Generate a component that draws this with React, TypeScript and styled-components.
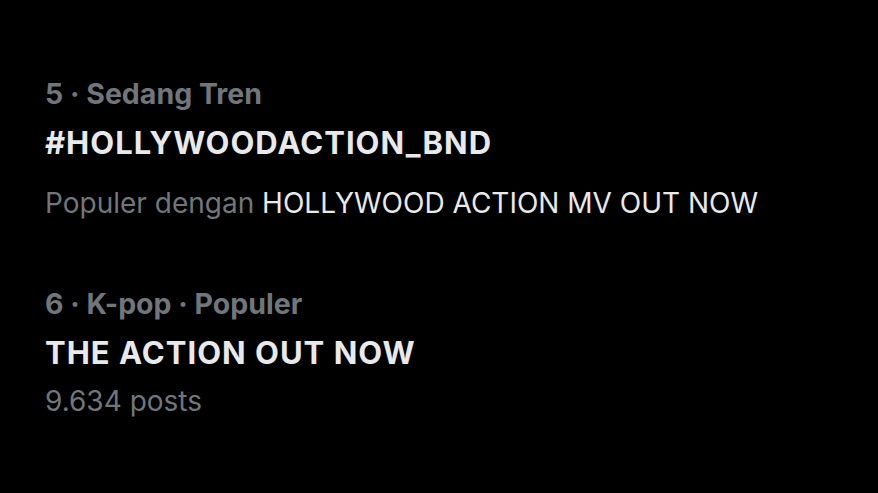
import React from "react";
import styled, { createGlobalStyle } from "styled-components";

const Global = createGlobalStyle`
  html, body {
    margin: 0;
    padding: 0;
    background: #000;
  }
  body {
    font-family: Inter, "Noto Sans", "Liberation Sans", sans-serif;
    -webkit-font-smoothing: antialiased;
  }
`;

const Page = styled.div`
  width: 878px;
  height: 493px;
  background: #000;
  display: flex;
  flex-direction: column;
  padding-top: 45px;
  box-sizing: border-box;
`;

const Trend = styled.div`
  display: flex;
  flex-direction: column;
  padding: 24px 45px 27px;
`;

const Meta = styled.div`
  color: #71767b;
  font-size: 28.5px;
  font-weight: 700;
  line-height: 49px;
`;

const Title = styled.div`
  color: #e7e9ea;
  font-size: 31px;
  font-weight: 700;
  line-height: 49px;
  letter-spacing: 1px;
`;

const Sub = styled.div<{ $gap?: number }>`
  color: #71767b;
  font-size: 28px;
  font-weight: 400;
  line-height: 49px;
  margin-top: ${(p) => p.$gap ?? 0}px;
`;

const Highlight = styled.span`
  color: #e7e9ea;
`;

type TrendItem = {
  meta: string;
  title: string;
  context?: string;
  posts?: string;
};

const trends: TrendItem[] = [
  {
    meta: "5 · Sedang Tren",
    title: "#HOLLYWOODACTION_BND",
    context: "HOLLYWOOD ACTION MV OUT NOW",
  },
  {
    meta: "6 · K-pop · Populer",
    title: "THE ACTION OUT NOW",
    posts: "9.634 posts",
  },
];

export default function App() {
  return (
    <Page>
      <Global />
      {trends.map((t) => (
        <Trend key={t.title}>
          <Meta>{t.meta}</Meta>
          <Title>{t.title}</Title>
          {t.context && (
            <Sub $gap={12}>
              Populer dengan <Highlight>{t.context}</Highlight>
            </Sub>
          )}
          {t.posts && <Sub>{t.posts}</Sub>}
        </Trend>
      ))}
    </Page>
  );
}
